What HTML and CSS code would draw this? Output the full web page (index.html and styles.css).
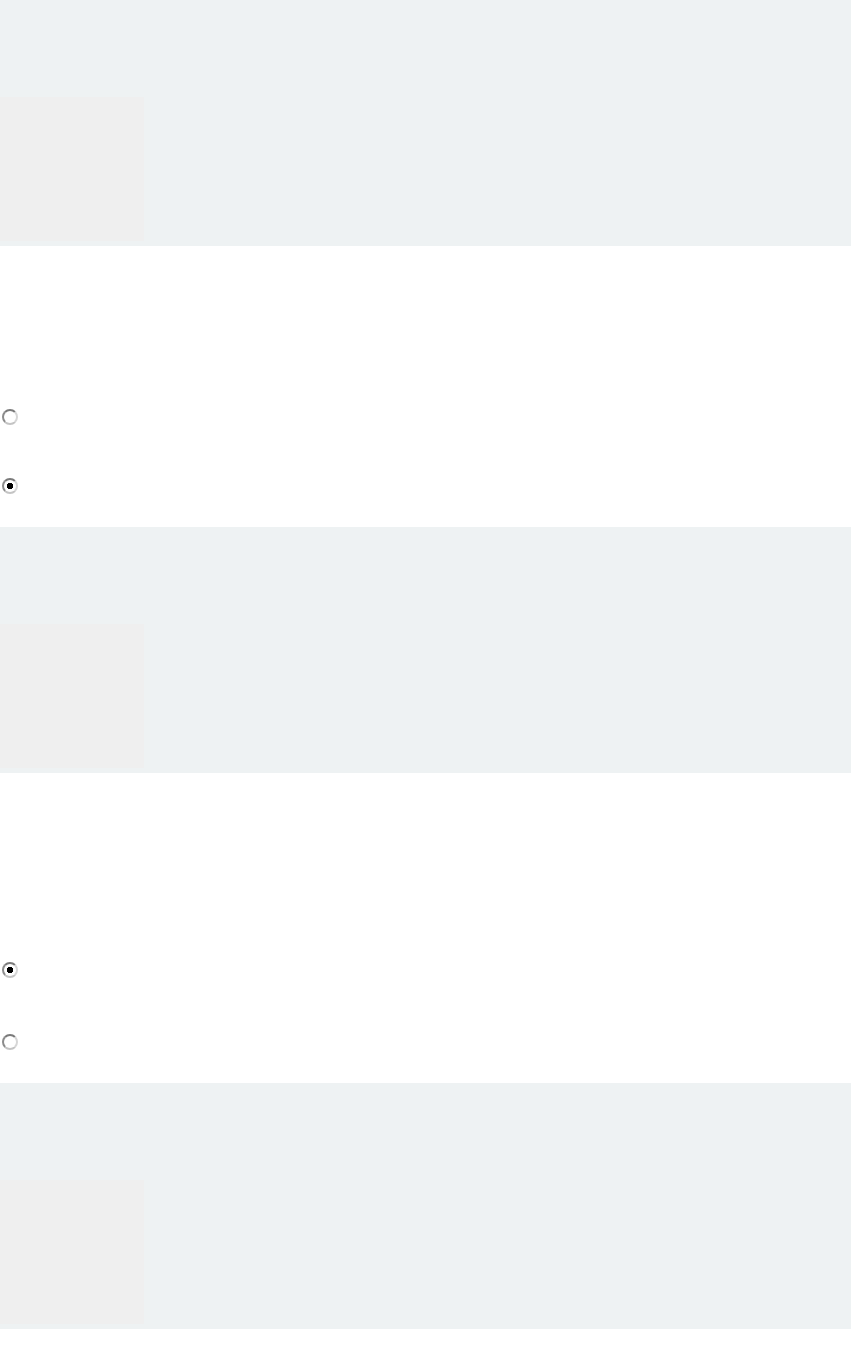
FILE: index.html
```html
<!DOCTYPE html>
<html lang="en">
<head>
<meta charset="utf-8">
<title>Quiz</title>
<link rel="stylesheet" href="styles.css">
</head>
<body>
<main class="quiz">
  <section class="media-band"><div class="media-box"></div></section>
  <section class="answers answers-a">
    <label class="option"><input type="radio" name="q1"></label>
    <label class="option"><input type="radio" name="q1" checked></label>
  </section>
  <section class="media-band"><div class="media-box"></div></section>
  <section class="answers answers-b">
    <label class="option"><input type="radio" name="q2" checked></label>
    <label class="option"><input type="radio" name="q2"></label>
  </section>
  <section class="media-band"><div class="media-box"></div></section>
</main>
</body>
</html>
```

FILE: styles.css
```css
html, body {
  margin: 0;
  padding: 0;
  background: #ffffff;
  font-family: "Liberation Sans", Arial, sans-serif;
}

.quiz {
  display: flex;
  flex-direction: column;
  width: 851px;
  min-height: 1369px;
}

.media-band {
  height: 246px;
  box-sizing: border-box;
  padding-top: 97px;
  background: #eef2f3;
}

.media-box {
  width: 144px;
  height: 144px;
  background: #efefef;
}

.answers {
  display: flex;
  flex-direction: column;
  padding-bottom: 33px;
}

.answers-a {
  padding-top: 163px;
  gap: 53px;
}

.answers-b {
  padding-top: 189px;
  gap: 56px;
}

.option {
  display: flex;
  height: 16px;
}

.option input {
  appearance: none;
  -webkit-appearance: none;
  box-sizing: border-box;
  width: 16px;
  height: 16px;
  margin: 0 0 0 2px;
  border-radius: 50%;
  border: 2px solid #a6a6a6;
  border-top-color: #7a7a7a;
  border-left-color: #8c8c8c;
  border-right-color: #d6d6d6;
  border-bottom-color: #c4c4c4;
  background: #ffffff;
}

.option input:checked {
  background: radial-gradient(circle, #000000 0 3px, #ffffff 3.5px);
}
```
